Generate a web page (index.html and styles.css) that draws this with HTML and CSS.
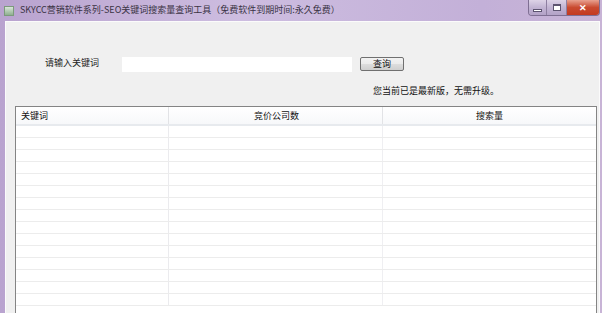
FILE: index.html
```html
<!DOCTYPE html>
<html lang="zh-CN">
<head>
    <meta charset="utf-8">
    <title>SKYCC营销软件系列-SEO关键词搜索量查询工具</title>
    <link rel="stylesheet" href="styles.css">
</head>
<body>
    <div class="win">
        <div class="titleBar">
            <span class="appIcon"></span>
            <span class="titleTxt">SKYCC营销软件系列-SEO关键词搜索量查询工具（免费软件到期时间:永久免费）</span>
            <div class="ctrls">
                <span class="ctrl ctrlMin"><i class="minBar"></i></span>
                <span class="ctrl ctrlMax"><i class="maxBox"></i></span>
                <span class="ctrl ctrlClose">&#x2715;</span>
            </div>
        </div>
        <div class="client">
            <div class="searchRow">
                <span class="lbl">请输入关键词</span>
                <input class="kwInput" type="text">
                <button class="btnQuery" type="button">查询</button>
            </div>
            <p class="verMsg">您当前已是最新版，无需升级。</p>
            <div class="grid">
                <div class="gridHead">
                    <div class="hc c1">关键词</div>
                    <div class="hc c2">竞价公司数</div>
                    <div class="hc c3">搜索量</div>
                </div>
                <div class="gridBody" id="rows"></div>
            </div>
        </div>
    </div>
    <script>
        let rows = "";
        for (let i = 0; i < 15; i++) {
            rows += '<div class="row"><div class="cell c1"></div><div class="cell c2"></div><div class="cell c3"></div></div>';
        }
        document.getElementById("rows").innerHTML = rows;
    </script>
</body>
</html>
```
FILE: styles.css
```css
html, body {
    margin: 0;
    padding: 0;
    overflow: hidden;
}

body {
    width: 602px;
    height: 313px;
    font-family: "Noto Sans CJK SC", "Liberation Sans", sans-serif;
    font-size: 9px;
    color: #222;
}

.win {
    height: 313px;
    background: linear-gradient(to right, #b9a3cf, #cdbde0 40%, #c3b0d8 80%, #c8b4d6);
    padding: 0 2px 0 5px;
    display: flex;
    flex-direction: column;
    overflow: hidden;
}

.titleBar {
    height: 21px;
    display: flex;
    align-items: flex-start;
    margin-left: -5px;
    margin-right: -2px;
    padding-left: 4px;
}

.appIcon {
    width: 8px;
    height: 8px;
    margin-top: 6px;
    background: linear-gradient(#d9e6d9, #8fb08f);
    border: 1px solid #7c9a7c;
}

.titleTxt {
    margin-left: 6px;
    margin-top: 4px;
    font-size: 9px;
    line-height: 12px;
    color: #3a3344;
    white-space: nowrap;
}

.ctrls {
    margin-left: auto;
    margin-right: 2px;
    display: flex;
    height: 15px;
    border: 1px solid #7f6f93;
    border-top: none;
    border-radius: 0 0 4px 4px;
    overflow: hidden;
}

.ctrl {
    height: 15px;
    display: flex;
    align-items: center;
    justify-content: center;
}

.ctrlMin {
    width: 17px;
}

.ctrlMax {
    width: 19px;
}

.ctrlMin, .ctrlMax {
    background: linear-gradient(#ddd3e7, #c2b4d3 50%, #b3a2c7);
    border-right: 1px solid #8e7fa1;
}

.minBar {
    width: 7px;
    height: 1px;
    margin-top: 5px;
    background: #fff;
    border: 1px solid #5d5470;
}

.maxBox {
    width: 6px;
    height: 4px;
    border: 1px solid #5d5470;
    border-top-width: 2px;
    background: #fff;
}

.ctrlClose {
    width: 32px;
    background: linear-gradient(#e8a190, #c94a30 50%, #c33a20);
    color: #fff;
    font-size: 9px;
    font-weight: bold;
}

.client {
    flex: 1;
    min-height: 0;
    background: #f0f0f0;
    border: 1px solid #fbfbfb;
    border-bottom: none;
    display: flex;
    flex-direction: column;
}

.searchRow {
    display: flex;
    align-items: center;
    margin-top: 34px;
    height: 16px;
}

.lbl {
    margin-left: 39px;
    width: 77px;
    line-height: 12px;
    margin-top: -2px;
}

.kwInput {
    width: 230px;
    height: 15px;
    border: none;
    padding: 0;
    background: #fff;
}

.btnQuery {
    margin-left: 8px;
    width: 44px;
    height: 14px;
    padding: 0;
    font-family: inherit;
    font-size: 9px;
    line-height: 12px;
    color: #111;
    border: 1px solid #707070;
    border-radius: 2px;
    background: linear-gradient(#f2f2f2, #ebebeb 50%, #dddddd 51%, #cfcfcf);
}

.verMsg {
    margin: 13px 0 0 367px;
    line-height: 12px;
    color: #111;
}

.grid {
    margin: 9px 2px 0 9px;
    flex: 1;
    min-height: 0;
    background: #fff;
    border: 1px solid #848484;
    border-bottom: none;
    display: flex;
    flex-direction: column;
    overflow: hidden;
}

.gridHead {
    display: flex;
    height: 17px;
    border-bottom: 2px solid #e7eaee;
    background: linear-gradient(#ffffff, #f7f8fa);
}

.hc {
    line-height: 18px;
    color: #111;
    border-right: 1px solid #e2e3e6;
}

.c1 {
    width: 147px;
    padding-left: 5px;
}

.c2 {
    width: 213px;
    text-align: center;
}

.c3 {
    flex: 1;
    text-align: center;
    border-right: none;
}

.hc.c2 {
    padding-left: 2px;
    width: 211px;
}

.row {
    display: flex;
    height: 11px;
    border-bottom: 1px solid #ececec;
}

.cell {
    border-right: 1px solid #efeff2;
}

.cell.c1 {
    border-right: 1px solid #ebebee;
    margin-left: 2px;
    padding-left: 3px;
}

.cell.c3 {
    border-right: none;
    margin-right: 4px;
}
```
